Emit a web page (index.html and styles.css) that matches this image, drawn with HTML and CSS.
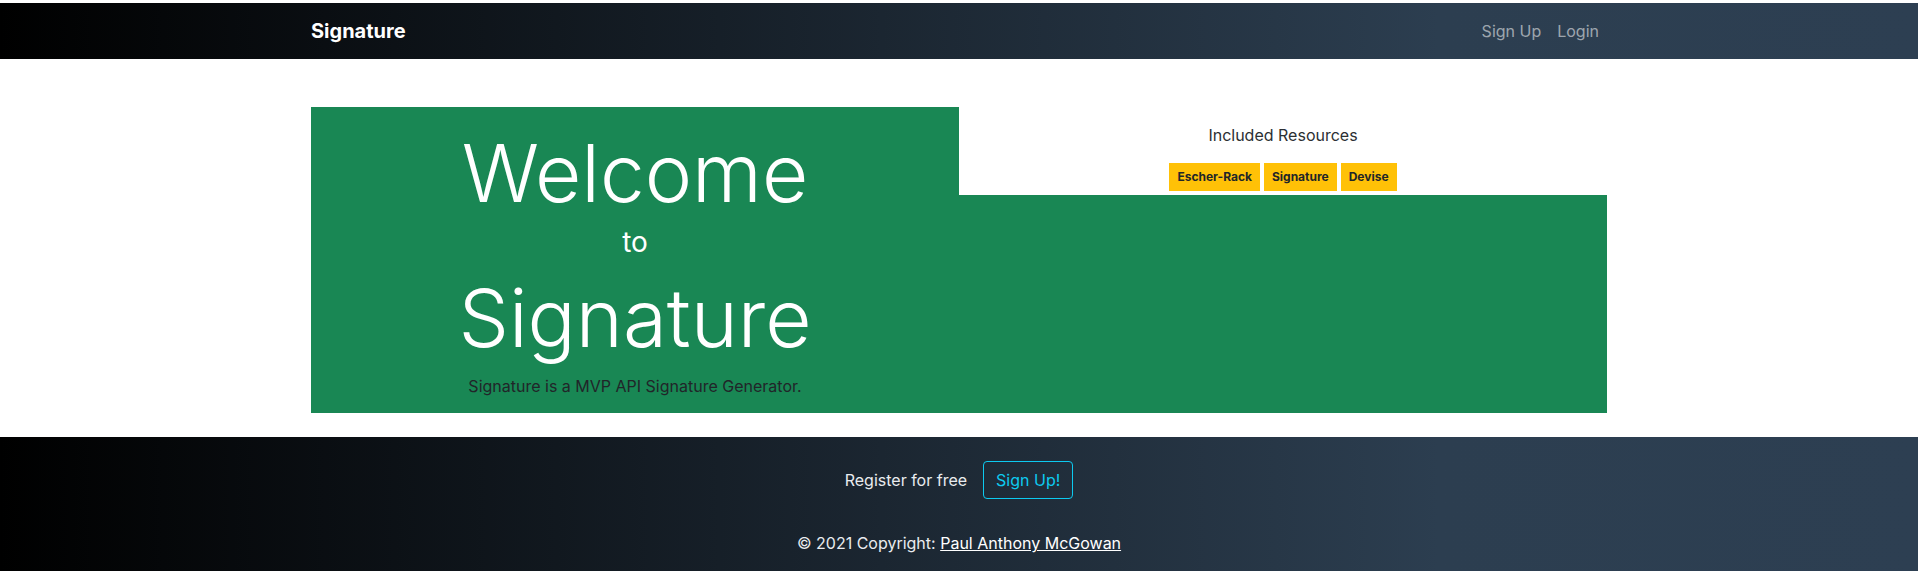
FILE: index.html
```html
<!DOCTYPE html>
<html lang="en">
<head>
<meta charset="utf-8">
<title>Signature</title>
<link rel="stylesheet" href="styles.css">
</head>
<body>
<nav class="navbar">
  <div class="container nav-inner">
    <a class="brand" href="#">Signature</a>
    <ul class="nav-links">
      <li><a class="nav-link" href="#">Sign Up</a></li>
      <li><a class="nav-link" href="#">Login</a></li>
    </ul>
  </div>
</nav>

<main class="container main">
  <div class="hero">
    <div class="hero-left">
      <h1 class="display">Welcome</h1>
      <p class="to">to</p>
      <h1 class="display">Signature</h1>
      <p class="lead">Signature is a MVP API Signature Generator.</p>
    </div>
    <div class="hero-right">
      <div class="resources">
        <p class="res-title">Included Resources</p>
        <div class="badges">
          <span class="badge">Escher-Rack</span>
          <span class="badge">Signature</span>
          <span class="badge">Devise</span>
        </div>
      </div>
    </div>
  </div>
</main>

<footer class="footer">
  <section class="register">
    <span class="register-text">Register for free</span>
    <a class="btn-outline" href="#">Sign Up!</a>
  </section>
  <div class="copyright">
    © 2021 Copyright: <a class="copy-link" href="#">Paul Anthony McGowan</a>
  </div>
</footer>
</body>
</html>
```

FILE: styles.css
```css
* { box-sizing: border-box; }

html, body {
  margin: 0;
  padding: 0;
  background: #ffffff;
}

body {
  padding-top: 3px;
  font-family: "Inter", "Liberation Sans", sans-serif;
  font-size: 16px;
  line-height: 1.5;
  color: #212529;
}

.container {
  width: 1296px;
  margin-left: auto;
  margin-right: auto;
}

.navbar {
  height: 56px;
  background: linear-gradient(to right, #000000 0%, #2c3e50 75%, #2d3f52 100%);
}

.nav-inner {
  height: 100%;
  display: flex;
  align-items: center;
  justify-content: space-between;
}

.brand {
  color: #ffffff;
  font-weight: 700;
  font-size: 20px;
  line-height: 30px;
  text-decoration: none;
}

.nav-links {
  list-style: none;
  margin: 0;
  padding: 0;
  display: flex;
}

.nav-link {
  display: block;
  padding: 8px;
  color: rgba(255, 255, 255, 0.55);
  text-decoration: none;
  font-size: 16px;
  line-height: 24px;
}

.nav-links li:last-child .nav-link {
  padding-right: 8px;
}

.main {
  margin-top: 48px;
  margin-bottom: 24px;
}

.hero {
  display: grid;
  grid-template-columns: 1fr 1fr;
  background: #198754;
  height: 306px;
}

.hero-left {
  display: flex;
  flex-direction: column;
  align-items: center;
  padding-top: 18px;
  color: #ffffff;
}

.display {
  margin: 0;
  font-size: 80px;
  font-weight: 300;
  line-height: 1.2;
}

.to {
  margin: 5px 0 10px;
  font-size: 28px;
  font-weight: 400;
  line-height: 1.2;
}

.lead {
  margin: 8px 0 0;
  font-size: 16px;
  line-height: 24px;
  color: #212529;
}

.hero-right {
  display: flex;
  flex-direction: column;
}

.resources {
  background: #ffffff;
  height: 88px;
  padding-top: 16px;
  display: flex;
  flex-direction: column;
  align-items: center;
}

.res-title {
  margin: 0 0 16px;
  font-size: 16px;
  line-height: 24px;
  color: #2b2f33;
}

.badges {
  display: flex;
  gap: 4px;
}

.badge {
  display: inline-block;
  background: #ffc107;
  color: #212529;
  font-size: 12px;
  font-weight: 700;
  line-height: 12px;
  padding: 8px;
}

.footer {
  background: linear-gradient(to right, #000000 0%, #2c3e50 75%, #2d3f52 100%);
  color: #e9ecef;
}

.register {
  display: flex;
  justify-content: center;
  align-items: center;
  gap: 16px;
  padding: 24px 0 17px;
}

.register-text {
  font-size: 16px;
  line-height: 24px;
}

.btn-outline {
  display: inline-block;
  padding: 6px 12px;
  border: 1px solid #0dcaf0;
  border-radius: 4px;
  color: #0dcaf0;
  text-decoration: none;
  font-size: 16px;
  line-height: 24px;
}

.copyright {
  text-align: center;
  padding: 15px 0 16px;
  font-size: 16px;
  line-height: 24px;
}

.copy-link {
  color: #ffffff;
  text-decoration: underline;
}
```
